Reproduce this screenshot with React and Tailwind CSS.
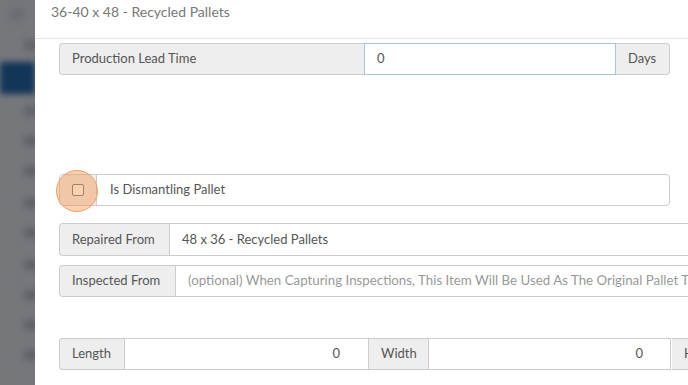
import React from "react";

const Addon = ({ children, className = "" }) => (
  <div
    className={`flex items-center shrink-0 whitespace-nowrap bg-[#eeeeee] px-[12px] text-[#555] ${className}`}
  >
    {children}
  </div>
);

const Backdrop = () => {
  const gaps = [30, 30, 32, 30, 32, 30, 30, 30];
  return (
    <div className="relative w-[35px] shrink-0 overflow-hidden bg-[#75777b]">
      <div className="flex flex-col blur-[3px]">
        <div className="h-[12px] ml-[10px] mt-[8px] w-[14px] bg-[#6a6c70]" />
        <div className="h-[10px] ml-[24px] mt-[20px] w-[14px] bg-[#626468]" />
        <div className="h-[32px] mt-[12px] bg-[#123558]" />
        <div className="h-[10px] ml-[24px] mt-[12px] w-[14px] bg-[#626468]" />
        {gaps.map((g, i) => (
          <div
            key={i}
            className="h-[10px] ml-[24px] w-[14px] bg-[#606266]"
            style={{ marginTop: g - 10 }}
          />
        ))}
      </div>
    </div>
  );
};

export default function App() {
  return (
    <div className="flex h-[385px] w-[688px] overflow-hidden bg-white font-['Lato','Liberation_Sans',sans-serif] text-[13px]">
      <Backdrop />
      <div className="flex-1 min-w-0 overflow-hidden">
        {/* Modal header */}
        <div className="h-[39px] border-b border-[#e5e5e5] pl-[16px] pt-[2px] text-[14px] leading-[20px] text-[#777]">
          36-40 x 48 - Recycled Pallets
        </div>

        <div className="pl-[24px] pt-[4px]">
          {/* Production lead time */}
          <div className="flex h-[32px] w-[611px]">
            <Addon className="w-[305px] rounded-l-[4px] border border-r-0 border-[#ccc]">
              Production Lead Time
            </Addon>
            <div className="flex flex-1 items-center border border-[#a7c6de] px-[12px] text-[#555]">
              0
            </div>
            <Addon className="w-[54px] rounded-r-[4px] border border-l-0 border-[#ccc]">
              Days
            </Addon>
          </div>

          {/* Dismantling checkbox */}
          <div className="relative mt-[99px] flex h-[32px] w-[611px] rounded-[4px] border border-[#ccc]">
            <div className="flex w-[37px] shrink-0 items-center justify-center rounded-l-[4px] border-r border-[#ccc] bg-[#eeeeee]">
              <div className="h-[12px] w-[12px] rounded-[2px] border border-[#777] bg-white" />
            </div>
            <div className="flex items-center pl-[13px] text-[#555]">
              Is Dismantling Pallet
            </div>
            <div className="absolute left-[-4px] top-[-5px] h-[42px] w-[42px] rounded-full border border-[#f0a06a] bg-[#f58c3c]/40" />
          </div>

          {/* Repaired from */}
          <div className="mt-[17px] flex h-[33px] w-[700px]">
            <Addon className="w-[110px] rounded-l-[4px] border border-r-0 border-[#ccc]">
              Repaired From
            </Addon>
            <div className="flex flex-1 items-center border border-[#ccc] px-[12px] text-[#555]">
              48 x 36 - Recycled Pallets
            </div>
          </div>

          {/* Inspected from */}
          <div className="mt-[9px] flex h-[32px] w-[700px]">
            <Addon className="w-[116px] rounded-l-[4px] border border-r-0 border-[#ccc]">
              Inspected From
            </Addon>
            <div className="flex min-w-0 flex-1 items-center overflow-hidden whitespace-nowrap border border-[#ccc] px-[12px] text-[13.3px] text-[#999]">
              (optional) When Capturing Inspections, This Item Will Be Used As The Original Pallet T
            </div>
          </div>

          {/* Dimensions */}
          <div className="mt-[41px] flex h-[32px] w-[700px]">
            <Addon className="w-[65px] rounded-l-[4px] border border-r-0 border-[#ccc]">
              Length
            </Addon>
            <div className="flex w-[245px] items-center justify-end border border-[#ccc] pr-[28px] text-[#555]">
              0
            </div>
            <Addon className="w-[59px] border-y border-[#ccc]">Width</Addon>
            <div className="flex w-[243px] items-center justify-end border border-[#ccc] pr-[27px] text-[#555]">
              0
            </div>
            <Addon className="ml-[1px] w-[24px] border border-l-0 border-[#ccc]">
              H
            </Addon>
          </div>
        </div>
      </div>
    </div>
  );
}
